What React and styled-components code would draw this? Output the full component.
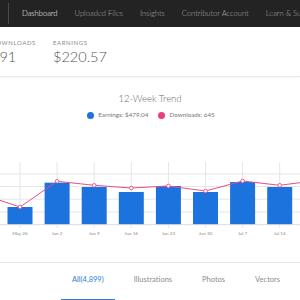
import React from "react";
import styled, { createGlobalStyle } from "styled-components";

const weeks = [
  { label: "May 26", bar: 205, point: 205 },
  { label: "Jun 2", bar: 180.7, point: 179.3 },
  { label: "Jun 9", bar: 185, point: 183.3 },
  { label: "Jun 16", bar: 190, point: 186 },
  { label: "Jun 23", bar: 184, point: 184 },
  { label: "Jun 30", bar: 190, point: 189 },
  { label: "Jul 7", bar: 180, point: 179 },
  { label: "Jul 14", bar: 185, point: 183.3 },
];

const navItems = ["Dashboard", "Uploaded Files", "Insights", "Contributor Account", "Learn & Support"];
const tabs = ["All(4,899)", "Illustrations", "Photos", "Vectors"];

const BASE = 222.7;
const STEP = 37.1;
const cx = (i) => 20 + STEP * i;

const App = () => {
  const linePts = [
    [-17, 192.6],
    ...weeks.map((w, i) => [cx(i), w.point]),
    [316.8, 178.5],
  ];

  return (
    <>
      <GlobalStyle />
      <Nav>
        <NavDivider />
        <NavList>
          {navItems.map((n, i) => (
            <NavItem key={n} $active={i === 0}>{n}</NavItem>
          ))}
        </NavList>
      </Nav>

      <Stats>
        <Stat $width={44}>
          <StatLabel>Downloads</StatLabel>
          <StatValue>891</StatValue>
        </Stat>
        <Stat>
          <StatLabel>Earnings</StatLabel>
          <StatValue>$220.57</StatValue>
        </Stat>
      </Stats>

      <ChartSection>
        <ChartTitle>12-Week Trend</ChartTitle>
        <Legend>
          <LegendItem>
            <Dot $color="#1d73dd" />
            Earnings: $479.04
          </LegendItem>
          <LegendItem>
            <Dot $color="#ec3f7c" />
            Downloads: 645
          </LegendItem>
        </Legend>
        <ChartSvg width="300" height="100" viewBox="0 140 300 100">
          {[172, 184.5, 197.2, 210].map((y) => (
            <line key={y} x1="0" x2="300" y1={y} y2={y} stroke="#e6e6e6" strokeWidth="1" />
          ))}
          {weeks.map((w, i) => (
            <line key={w.label} x1={cx(i)} x2={cx(i)} y1="160" y2={BASE + 3} stroke="#e6e6e6" strokeWidth="1" />
          ))}
          {weeks.map((w, i) => (
            <rect key={w.label} x={cx(i) - 12.5} y={w.bar} width="25" height={BASE - w.bar} fill="#1d73dd" />
          ))}
          <line x1="0" x2="300" y1={BASE} y2={BASE} stroke="#dcdcdc" strokeWidth="1" />
          <polyline
            points={linePts.map((p) => p.join(",")).join(" ")}
            fill="none"
            stroke="#e4508a"
            strokeWidth="1"
          />
          {weeks.map((w, i) => (
            <circle key={w.label} cx={cx(i)} cy={w.point} r="1.8" fill="#fff" stroke="#e4508a" strokeWidth="0.9" />
          ))}
          {weeks.map((w, i) => (
            <AxisLabel key={w.label} x={cx(i)} y="232.5" textAnchor="middle">
              {w.label}
            </AxisLabel>
          ))}
        </ChartSvg>
      </ChartSection>

      <Tabs>
        {tabs.map((t, i) => (
          <Tab key={t} $active={i === 0}>{t}</Tab>
        ))}
      </Tabs>
    </>
  );
};

export default App;

const GlobalStyle = createGlobalStyle`
  html, body {
    margin: 0;
    padding: 0;
    background: #ffffff;
    overflow: hidden;
  }
  body {
    font-family: Lato, "Open Sans", "Liberation Sans", sans-serif;
    width: 300px;
  }
`;

const Nav = styled.div`
  height: 27px;
  background: #232323;
  display: flex;
  align-items: center;
  overflow: hidden;
  white-space: nowrap;
`;

const NavDivider = styled.div`
  width: 1px;
  height: 21px;
  margin-left: 8px;
  margin-top: -1px;
  background: #4a4a4a;
  flex-shrink: 0;
`;

const NavList = styled.div`
  display: flex;
  gap: 17px;
  margin-left: 13px;
  margin-top: -2px;
`;

const NavItem = styled.span`
  font-size: 7.6px;
  font-weight: 300;
  color: ${(p) => (p.$active ? "#ffffff" : "#adadad")};
  flex-shrink: 0;
`;

const Stats = styled.div`
  display: flex;
  gap: 18px;
  margin-left: -9px;
  padding: 12px 0 11px;
  border-bottom: 1px solid #e9e9e9;
  box-shadow: 0 1px 2px rgba(0, 0, 0, 0.04);
`;

const Stat = styled.div`
  display: flex;
  flex-direction: column;
  width: ${(p) => (p.$width ? `${p.$width}px` : "auto")};
`;

const StatLabel = styled.div`
  font-size: 6px;
  line-height: 8px;
  letter-spacing: 0.6px;
  text-transform: uppercase;
  color: #8a8a8a;
`;

const StatValue = styled.div`
  font-size: 14.5px;
  line-height: 16px;
  margin-top: 2px;
  font-weight: 300;
  color: #555555;
  white-space: nowrap;
`;

const ChartSection = styled.div`
  display: flex;
  flex-direction: column;
  align-items: center;
  padding-top: 16px;
  padding-bottom: 20px;
  border-bottom: 1px solid #e8e8e8;
`;

const ChartTitle = styled.div`
  font-size: 9.5px;
  line-height: 12px;
  font-weight: 300;
  color: #6a6a6a;
`;

const Legend = styled.div`
  display: flex;
  gap: 10px;
  margin-top: 6px;
  margin-left: 2px;
`;

const LegendItem = styled.div`
  display: flex;
  align-items: center;
  gap: 4px;
  font-size: 6.3px;
  line-height: 8px;
  color: #777777;
`;

const Dot = styled.span`
  width: 7px;
  height: 7px;
  border-radius: 50%;
  background: ${(p) => p.$color};
`;

const ChartSvg = styled.svg`
  display: block;
  margin-top: 23px;
`;

const AxisLabel = styled.text`
  font-size: 4.6px;
  fill: #8a8a8a;
  font-family: Lato, "Liberation Sans", sans-serif;
`;

const Tabs = styled.div`
  display: flex;
  gap: 8px;
  padding-left: 61px;
  white-space: nowrap;
`;

const Tab = styled.div`
  height: 33px;
  display: flex;
  align-items: center;
  padding: 0 11px 3px;
  font-size: 7.5px;
  color: ${(p) => (p.$active ? "#2f7fd3" : "#8c8c8c")};
  border-bottom: 2px solid ${(p) => (p.$active ? "#2f7fd3" : "transparent")};
`;
